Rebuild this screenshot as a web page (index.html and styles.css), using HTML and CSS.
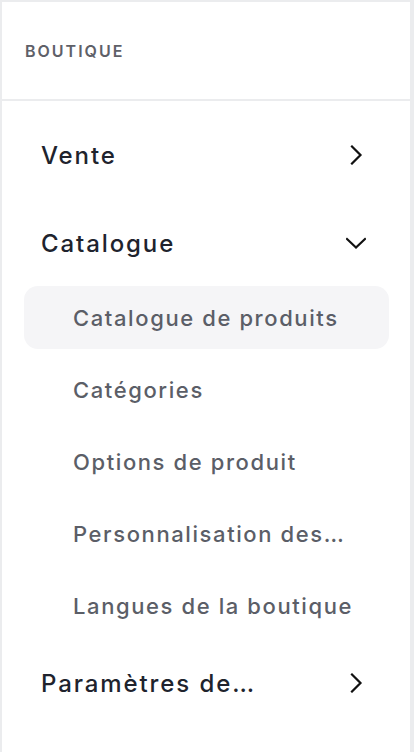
FILE: index.html
```html
<!DOCTYPE html>
<html lang="fr">
<head>
  <meta charset="UTF-8" />
  <meta name="viewport" content="width=device-width, initial-scale=1.0"/>
  <title>Boutique</title>
  <link rel="stylesheet" href="styles.css">
</head>
<body>
  <nav class="panel">
    <div class="panel-header">BOUTIQUE</div>

    <ul class="menu">
      <li class="menu-item">
        <span class="menu-label">Vente</span>
        <svg class="chevron" viewBox="0 0 20 20" width="20" height="20">
          <path d="M6 1.5 L14.5 10 L6 18.5" />
        </svg>
      </li>

      <li class="menu-item open">
        <span class="menu-label">Catalogue</span>
        <svg class="chevron" viewBox="0 0 20 20" width="20" height="20">
          <path d="M1 6 L10 14.5 L19 6" />
        </svg>
      </li>

      <li>
        <ul class="submenu">
          <li class="submenu-item active">Catalogue de produits</li>
          <li class="submenu-item">Catégories</li>
          <li class="submenu-item">Options de produit</li>
          <li class="submenu-item">Personnalisation des…</li>
          <li class="submenu-item">Langues de la boutique</li>
        </ul>
      </li>

      <li class="menu-item last">
        <span class="menu-label">Paramètres de…</span>
        <svg class="chevron" viewBox="0 0 20 20" width="20" height="20">
          <path d="M6 1.5 L14.5 10 L6 18.5" />
        </svg>
      </li>
    </ul>
  </nav>
</body>
</html>
```

FILE: styles.css
```css
:root {
  --frame: #ebecee;
  --text-main: #20232d;
  --text-sub: #5b5e67;
  --active-bg: #f5f5f7;
}

* {
  box-sizing: border-box;
}

html, body {
  margin: 0;
  height: 100%;
}

body {
  font-family: Inter, "Noto Sans", sans-serif;
  background: var(--frame);
  overflow: hidden;
}

.panel {
  margin: 2px 4px 0 2px;
  height: calc(100vh - 2px);
  background: #fff;
}

.panel-header {
  height: 99px;
  border-bottom: 2px solid var(--frame);
  display: flex;
  align-items: center;
  padding-left: 23px;
  font-size: 16px;
  font-weight: 600;
  letter-spacing: 2px;
  color: #5e6068;
}

.menu, .submenu {
  list-style: none;
  margin: 0;
  padding: 0;
}

.menu {
  padding-top: 22px;
}

.menu-item {
  height: 64px;
  display: flex;
  align-items: center;
  justify-content: space-between;
  padding: 0 44px 0 39px;
  color: var(--text-main);
  font-size: 24px;
  font-weight: 500;
  letter-spacing: 1.9px;
}

.menu-item + .menu-item {
  margin-top: 24px;
}

.menu-item.last {
  margin-top: 14px;
}

.menu-label {
  white-space: nowrap;
}

.chevron {
  flex: none;
  fill: none;
  stroke: #111;
  stroke-width: 2.2;
  stroke-linecap: square;
}

.submenu {
  margin-top: 11px;
  display: flex;
  flex-direction: column;
  gap: 9px;
}

.submenu-item {
  height: 63px;
  margin: 0 21px 0 22px;
  padding: 0 10px 0 49px;
  border-radius: 14px;
  display: flex;
  align-items: center;
  font-size: 22px;
  font-weight: 500;
  letter-spacing: 1.6px;
  color: var(--text-sub);
  white-space: nowrap;
}

.submenu-item.active {
  background: var(--active-bg);
}
```
